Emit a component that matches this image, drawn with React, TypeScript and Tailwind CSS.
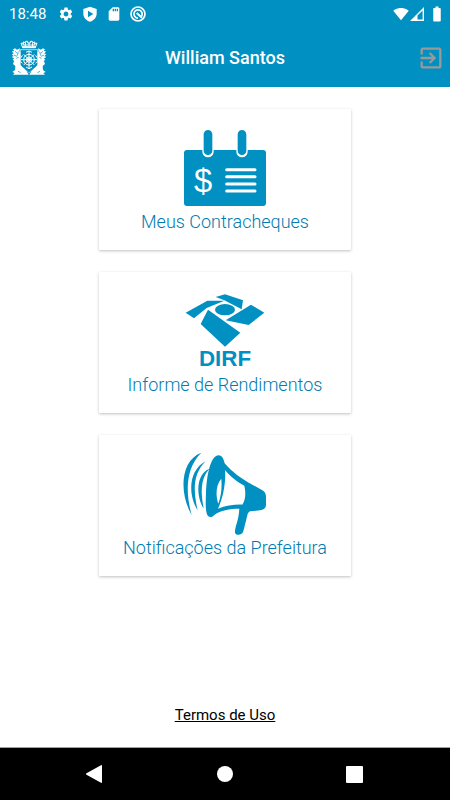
import React from "react";
import {
  MdBatteryFull,
  MdExitToApp,
  MdSdCard,
  MdSettings,
  MdSignalWifi4Bar,
} from "react-icons/md";

const ShieldIcon = () => (
  <svg viewBox="0 0 24 24" className="size-4" fill="currentColor" aria-hidden="true">
    <path
      fillRule="evenodd"
      d="M12 1 2 4.500v7c0 5.500 4 10 10 12 6-2 10-6.500 10-12v-7L12 1zM9 7l8 5-8 5V7z"
    />
  </svg>
);

const TargetIcon = () => (
  <svg
    viewBox="0 0 24 24"
    className="size-4"
    fill="none"
    stroke="currentColor"
    strokeWidth="2.500"
    aria-hidden="true"
  >
    <circle cx="12" cy="12" r="10.500" />
    <path d="M17.200 15.500A6.200 6.200 0 1 0 12 18.200" />
    <path d="M10 10.500l8 7" strokeWidth="3" />
  </svg>
);

const SignalIcon = () => (
  <svg viewBox="0 0 14 14" className="size-3.5" aria-hidden="true">
    <path
      fill="currentColor"
      fillRule="evenodd"
      d="M14 0v14H0L14 0zM12.600 3.400L7.500 8.500v4.100h5.100z"
    />
  </svg>
);

const Crest = () => (
  <svg viewBox="33 115 108 106" className="ml-[6px] size-9" aria-label="Brasão" role="img">
    <g fill="none" stroke="#fff" strokeWidth="3">
      {/* crown */}
      <path d="M68 137l-5-14 8 4-2-7 8 2v-4h6v5h8v-5h6v4l8-2-2 7 8-4-5 14z" />
      <path d="M67 135h40" strokeWidth="5" />
      <path d="M68 129h38M76 123v12M87 122v12M98 123v12" />
      {/* shield */}
      <path d="M61 143h52v42c0 12-12 18-26 27-14-9-26-15-26-27z" strokeWidth="2" />
      <circle cx="87" cy="173" r="16" />
      <circle cx="87" cy="173" r="8" />
      <path d="M87 147v52M63 173h48M71 157l32 32M103 157l-32 32" />
      <path d="M78 151l9-4 9 4M67 160l-4 7M107 160l4 7M67 184l-4-5M107 184l4-5M78 195l9 5 9-5" />
    </g>
    <g fill="#fff">
      {/* side leaves */}
      <path d="M43 137l8 6 9-4-2 9 3 3v29l-8 3-9-3-6-8 5-1-8-7 6-1-6-7 6-1-5-7 7-1-5-6 6 1z" />
      <path d="M131 137l-8 6-9-4 2 9-3 3v29l8 3 9-3 6-8-5-1 8-7-6-1 6-7-6-1 5-7-7-1 5-6-6 1z" />
      {/* dolphins */}
      <path d="M42 178l10 1 9-5-1 14 8 8c9 5 13 14 18 22H39l5-5-7-3 8-6 1-12-7-6z" />
      <path d="M132 178l-10 1-9-5 1 14-8 8c-9 5-13 14-18 22h47l-5-5 7-3-8-6-1-12 7-6z" />
      <circle cx="87" cy="173" r="5" />
    </g>
    <g fill="none" stroke="#0090c2" strokeWidth="2">
      <path d="M45 148l7 6M41 159l10 4M55 149l-3 12M49 169l7-3M129 148l-7 6M133 159l-10 4M119 149l3 12M125 169l-7-3" />
      <path d="M54 208l8 4M120 208l-8 4M81 210h12" />
    </g>
  </svg>
);

const PayslipIcon = () => (
  <svg viewBox="285 84 246 246" className="size-[82px]" aria-hidden="true">
    <rect x="285" y="150" width="246" height="168" rx="9" fill="#0090c2" />
    <g strokeLinecap="round">
      <path d="M357 148v7M459 148v7" stroke="#fff" strokeWidth="34" />
      <path d="M357 103v49M459 103v49" stroke="#0090c2" strokeWidth="26" />
      <path
        d="M413 209h85M413 230h85M413 252h85M413 273h85"
        stroke="#fff"
        strokeWidth="9"
      />
    </g>
    <text
      x="342"
      y="276"
      textAnchor="middle"
      fill="#fff"
      fontSize="98"
      fontFamily="'Liberation Sans', sans-serif"
    >
      $
    </text>
  </svg>
);

const DirfIcon = () => (
  <svg viewBox="285 81 246 246" className="size-[82px]" aria-hidden="true">
    <g fill="#0090c2">
      <path d="M290 146l65-36h51l-53 22-38 31z" />
      <path d="M380 99l28-8 54 18-4 27-52-27z" />
      <path d="M486 122l40 24-47 37-69-14z" />
      <path d="M357 137l97 69-46 42-73-68z" />
      <ellipse cx="408" cy="137" rx="30" ry="17" />
      <text
        x="408"
        y="307"
        textAnchor="middle"
        fontSize="67"
        fontWeight="700"
        fontFamily="'Liberation Sans', sans-serif"
      >
        DIRF
      </text>
    </g>
  </svg>
);

const MegaphoneIcon = () => (
  <svg viewBox="285 77 246 246" className="size-[82px] overflow-visible" aria-hidden="true">
    <g fill="#0090c2">
      <path d="M337 73c-65 24-66 125-29 187-17-59-22-138 29-187z" />
      <path d="M350 99c-54 28-52 104-24 147-11-50-19-105 24-147z" />
      <path d="M361 121c-43 18-38 86-17 119-8-43-12-87 17-119z" />
      <path
        fillRule="evenodd"
        d="M389 81c11 0 15 12 18 24 20 24 51 48 83 64l30 17c8 5 11 11 11 20v23c0 10-8 16-18 17l-30 3c-5 2-7 7-8 12l-11 44c-3 12-8 14-18 14-7 0-9-4-8-12 3-20 11-33 13-66-29 0-57 5-74 18-5 5-8 7-13 7-17 0-14-42-13-73 2-50 13-112 38-112zM408 125c3 33-4 79-21 116 22-9 53-13 73-12 10-16 11-36 6-57-20-10-42-27-58-47zM397 151c-16 17-18 50-9 75 9-24 11-47 9-75z"
      />
    </g>
  </svg>
);

const MenuCard = ({ icon, label }: { icon: React.ReactNode; label: string }) => {
  return (
    <button
      type="button"
      className="flex w-[56%] flex-col items-center rounded-[1px] bg-white pt-[19px] pb-4 text-lg/6 font-light whitespace-nowrap text-[#007bb0] shadow-[0_1px_3px_rgba(0,0,0,0.25)]"
    >
      {icon}
      <span>{label}</span>
    </button>
  );
};

const App = () => {
  return (
    <div className="flex min-h-screen flex-col bg-white font-[Roboto,sans-serif]">
      <header className="bg-[#0090c2] text-white">
        <div className="flex h-7 items-center justify-between pr-1 pl-[9px]">
          <div className="flex items-center gap-2">
            <span className="mr-1 text-[15px]">18:48</span>
            <MdSettings className="size-4" />
            <ShieldIcon />
            <MdSdCard className="size-4" />
            <TargetIcon />
          </div>
          <div className="flex items-center">
            <MdSignalWifi4Bar className="mr-px size-4" />
            <SignalIcon />
            <MdBatteryFull className="ml-1 size-[18px]" />
          </div>
        </div>
        <div className="grid h-[59px] grid-cols-[1fr_auto_1fr] items-center px-[5px]">
          <Crest />
          <h1 className="text-lg font-medium">William Santos</h1>
          <button type="button" aria-label="Sair" className="justify-self-end text-[#999]">
            <MdExitToApp className="size-7" />
          </button>
        </div>
      </header>
      <main className="flex flex-1 flex-col items-center gap-[22px] pt-[22px]">
        <MenuCard icon={<PayslipIcon />} label="Meus Contracheques" />
        <MenuCard icon={<DirfIcon />} label="Informe de Rendimentos" />
        <MenuCard icon={<MegaphoneIcon />} label="Notificações da Prefeitura" />
        <a href="#termos" className="mt-auto mb-5 text-[15px]/6 text-black underline">
          Termos de Uso
        </a>
      </main>
      <nav className="flex h-[53px] items-center justify-center gap-[113px] border-t border-gray-400 bg-black pr-0.5 text-white">
        <button type="button" aria-label="Voltar">
          <svg viewBox="0 0 18 18" className="size-[18px]" fill="currentColor">
            <path d="M.5 8.300 15 .2q1-.5 1 .6v16.400q0 1.100-1 .6L.5 9.700q-1-.7 0-1.400z" />
          </svg>
        </button>
        <button type="button" aria-label="Início" className="size-4 rounded-full bg-white" />
        <button type="button" aria-label="Recentes" className="size-[17px] rounded-[1px] bg-white" />
      </nav>
    </div>
  );
};

export default App;
